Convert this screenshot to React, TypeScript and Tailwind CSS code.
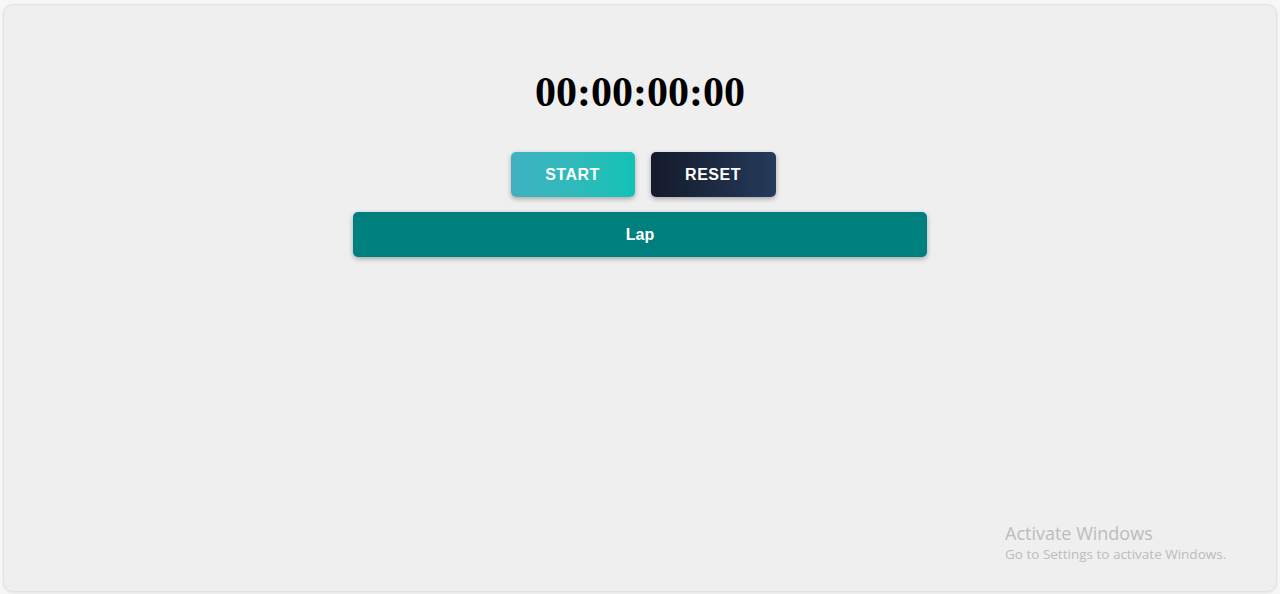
import { useEffect, useRef, useState } from "react";

const pad = (n: number) => String(n).padStart(2, "0");

const formatTime = (ms: number) => {
    const h = Math.floor(ms / 3600000);
    const m = Math.floor(ms / 60000) % 60;
    const s = Math.floor(ms / 1000) % 60;
    const cs = Math.floor(ms / 10) % 100;
    return `${pad(h)}:${pad(m)}:${pad(s)}:${pad(cs)}`;
};

const App = () => {
    const [elapsed, setElapsed] = useState(0);
    const [running, setRunning] = useState(false);
    const [laps, setLaps] = useState<number[]>([]);
    const startRef = useRef(0);

    useEffect(() => {
        if (!running) return;
        startRef.current = Date.now() - elapsed;
        const id = setInterval(() => setElapsed(Date.now() - startRef.current), 10);
        return () => clearInterval(id);
    }, [running]);

    const reset = () => {
        setRunning(false);
        setElapsed(0);
        setLaps([]);
    };

    return (
        <div className="min-h-screen bg-[#f7f7f7] px-[3px] pt-[4px] pb-[2px]">
            <div className="relative h-[588px] rounded-[10px] border border-[#e2e2e2] bg-[#efefef] shadow-[0_1px_3px_rgba(0,0,0,0.08)] flex flex-col items-center pt-[63px]">
                <h1 className="font-['Liberation_Serif','Times_New_Roman',serif] text-[42px] leading-[48px] font-bold text-black">
                    {formatTime(elapsed)}
                </h1>

                <div className="mt-[36px] ml-[6px] flex gap-4 font-['Liberation_Sans',Arial,sans-serif]">
                    <button
                        onClick={() => setRunning(!running)}
                        className="w-[124px] h-[45px] rounded-[5px] bg-gradient-to-r from-[#3fb1c1] to-[#0fc2b4] text-white text-base font-bold tracking-[0.5px] shadow-[0_2px_5px_rgba(0,0,0,0.3)]"
                    >
                        {running ? "STOP" : "START"}
                    </button>
                    <button
                        onClick={reset}
                        className="w-[125px] h-[45px] rounded-[5px] bg-gradient-to-r from-[#141a2b] to-[#253b5b] text-white text-base font-bold tracking-[0.5px] shadow-[0_2px_5px_rgba(0,0,0,0.3)]"
                    >
                        RESET
                    </button>
                </div>

                <button
                    onClick={() => running && setLaps([...laps, elapsed])}
                    className="mt-[15px] w-[574px] h-[45px] rounded-[5px] bg-[#007f7f] text-white text-base font-bold font-['Liberation_Sans',Arial,sans-serif] shadow-[0_2px_5px_rgba(0,0,0,0.3)]"
                >
                    Lap
                </button>

                {laps.length > 0 && (
                    <ul className="mt-4 w-[574px] space-y-1 font-['Liberation_Sans',Arial,sans-serif] text-neutral-700">
                        {laps.map((lap, i) => (
                            <li key={i} className="flex justify-between">
                                <span>Lap {i + 1}</span>
                                <span>{formatTime(lap)}</span>
                            </li>
                        ))}
                    </ul>
                )}

                <div className="absolute left-[1001px] top-[516px] font-['Open_Sans','Noto_Sans',sans-serif] text-[#bcbcbc] pointer-events-none">
                    <p className="text-[18px] leading-[24px]">Activate Windows</p>
                    <p className="text-[13.5px] leading-[18px]">Go to Settings to activate Windows.</p>
                </div>
            </div>
        </div>
    );
};

export default App;
